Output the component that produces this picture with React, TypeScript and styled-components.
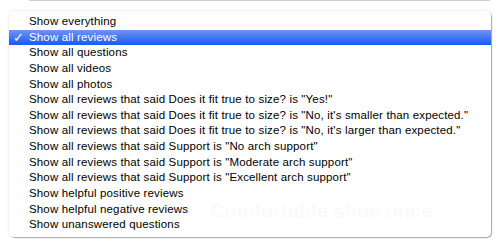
import React from "react";
import styled, { createGlobalStyle } from "styled-components";

const GlobalStyle = createGlobalStyle`
  html, body {
    margin: 0;
    padding: 0;
    background: #ffffff;
  }
`;

const Page = styled.div`
  position: relative;
  width: 501px;
  height: 251px;
  overflow: hidden;
  background: #ffffff;
  font-family: "Liberation Sans", Arial, sans-serif;
`;

const SelectEdge = styled.div`
  margin-left: 29px;
  width: 461px;
  height: 1px;
  background: #cfcfcf;
`;

const Backdrop = styled.div`
  padding: 198px 0 0 210px;
`;

const GhostTitle = styled.div`
  font-size: 20px;
  line-height: 24px;
  font-weight: bold;
  color: #c6c6c6;
  white-space: nowrap;
`;

const Menu = styled.ul`
  position: absolute;
  left: 9px;
  top: 11px;
  width: 482px;
  margin: 0;
  padding: 3px 0 4px;
  list-style: none;
  background: rgba(255, 255, 255, 0.9);
  border-radius: 5px;
  box-shadow: 1px 1px 1px rgba(0, 0, 0, 0.32), 0 0 3px rgba(0, 0, 0, 0.12);
`;

const Option = styled.li<{ $selected?: boolean }>`
  position: relative;
  height: 15.65px;
  line-height: 15.65px;
  padding-left: 20px;
  font-size: 11.5px;
  letter-spacing: 0.15px;
  white-space: nowrap;
  color: ${(p) => (p.$selected ? "#ffffff" : "#000000")};
  background: ${(p) =>
    p.$selected ? "linear-gradient(#7193f2, #175af7)" : "transparent"};
`;

const Check = styled.span`
  position: absolute;
  left: 4px;
  top: 0;
  font-family: "DejaVu Sans", sans-serif;
  font-size: 13px;
  font-weight: bold;
`;

const options = [
  "Show everything",
  "Show all reviews",
  "Show all questions",
  "Show all videos",
  "Show all photos",
  'Show all reviews that said Does it fit true to size? is "Yes!"',
  'Show all reviews that said Does it fit true to size? is "No, it\'s smaller than expected."',
  'Show all reviews that said Does it fit true to size? is "No, it\'s larger than expected."',
  'Show all reviews that said Support is "No arch support"',
  'Show all reviews that said Support is "Moderate arch support"',
  'Show all reviews that said Support is "Excellent arch support"',
  "Show helpful positive reviews",
  "Show helpful negative reviews",
  "Show unanswered questions",
];

const selected = 1;

export default function App() {
  return (
    <>
      <GlobalStyle />
      <Page>
        <SelectEdge />
        <Backdrop>
          <GhostTitle>Comfortable shoe once</GhostTitle>
        </Backdrop>
        <Menu>
          {options.map((label, i) => (
            <Option key={label} $selected={i === selected}>
              {i === selected && <Check>✓</Check>}
              {label}
            </Option>
          ))}
        </Menu>
      </Page>
    </>
  );
}
